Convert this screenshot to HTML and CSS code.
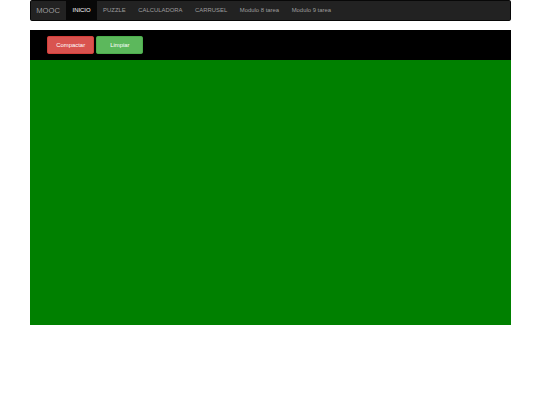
FILE: index.html
```html
<!DOCTYPE html>
<html lang="es">
<head>
<meta charset="utf-8">
<title>MOOC</title>
<link rel="stylesheet" href="styles.css">
</head>
<body>
<nav class="navbar">
  <a class="brand" href="#">MOOC</a>
  <ul class="nav">
    <li class="active"><a href="#">INICIO</a></li>
    <li><a href="#">PUZZLE</a></li>
    <li><a href="#">CALCULADORA</a></li>
    <li><a href="#">CARRUSEL</a></li>
    <li><a href="#">Modulo 8 tarea</a></li>
    <li><a href="#">Modulo 9 tarea</a></li>
  </ul>
</nav>
<main class="container">
  <div class="toolbar">
    <button class="btn btn-danger">Compactar</button>
    <button class="btn btn-success">Limpiar</button>
  </div>
  <div class="board"></div>
</main>
</body>
</html>
```

FILE: styles.css
```css
html, body {
  margin: 0;
  padding: 0;
  background: #fff;
  font-family: "Liberation Sans", Arial, sans-serif;
}

.navbar {
  box-sizing: border-box;
  width: 481px;
  height: 21.3px;
  margin: 0 auto 8.7px;
  background: #222;
  border: 1px solid #080808;
  border-radius: 1.7px;
  display: flex;
  align-items: stretch;
}

.brand {
  display: block;
  padding: 0 6.3px 0 5.8px;
  font-size: 7.6px;
  line-height: 19.3px;
  color: #9d9d9d;
  text-decoration: none;
}

.nav {
  list-style: none;
  margin: 0;
  padding: 0;
  display: flex;
}

.nav a {
  display: block;
  padding: 0 6.3px;
  font-size: 5.9px;
  line-height: 19.3px;
  color: #9d9d9d;
  text-decoration: none;
}

.nav .active a {
  color: #fff;
  background: #080808;
}

.container {
  width: 481px;
  margin: 0 auto;
}

.toolbar {
  background: #000;
  height: 30px;
  box-sizing: border-box;
  padding: 6.5px 0 0 17.8px;
  display: flex;
  gap: 2.4px;
  align-items: flex-start;
}

.btn {
  width: 46.8px;
  height: 17.2px;
  padding: 0;
  border: 0.42px solid transparent;
  border-radius: 1.7px;
  font-family: "Liberation Sans", Arial, sans-serif;
  font-size: 5.9px;
  color: #fff;
  cursor: pointer;
}

.btn-danger {
  background: #d9534f;
  border-color: #d43f3a;
}

.btn-success {
  background: #5cb85c;
  border-color: #4cae4c;
}

.board {
  height: 265.5px;
  background: #008000;
}
```
